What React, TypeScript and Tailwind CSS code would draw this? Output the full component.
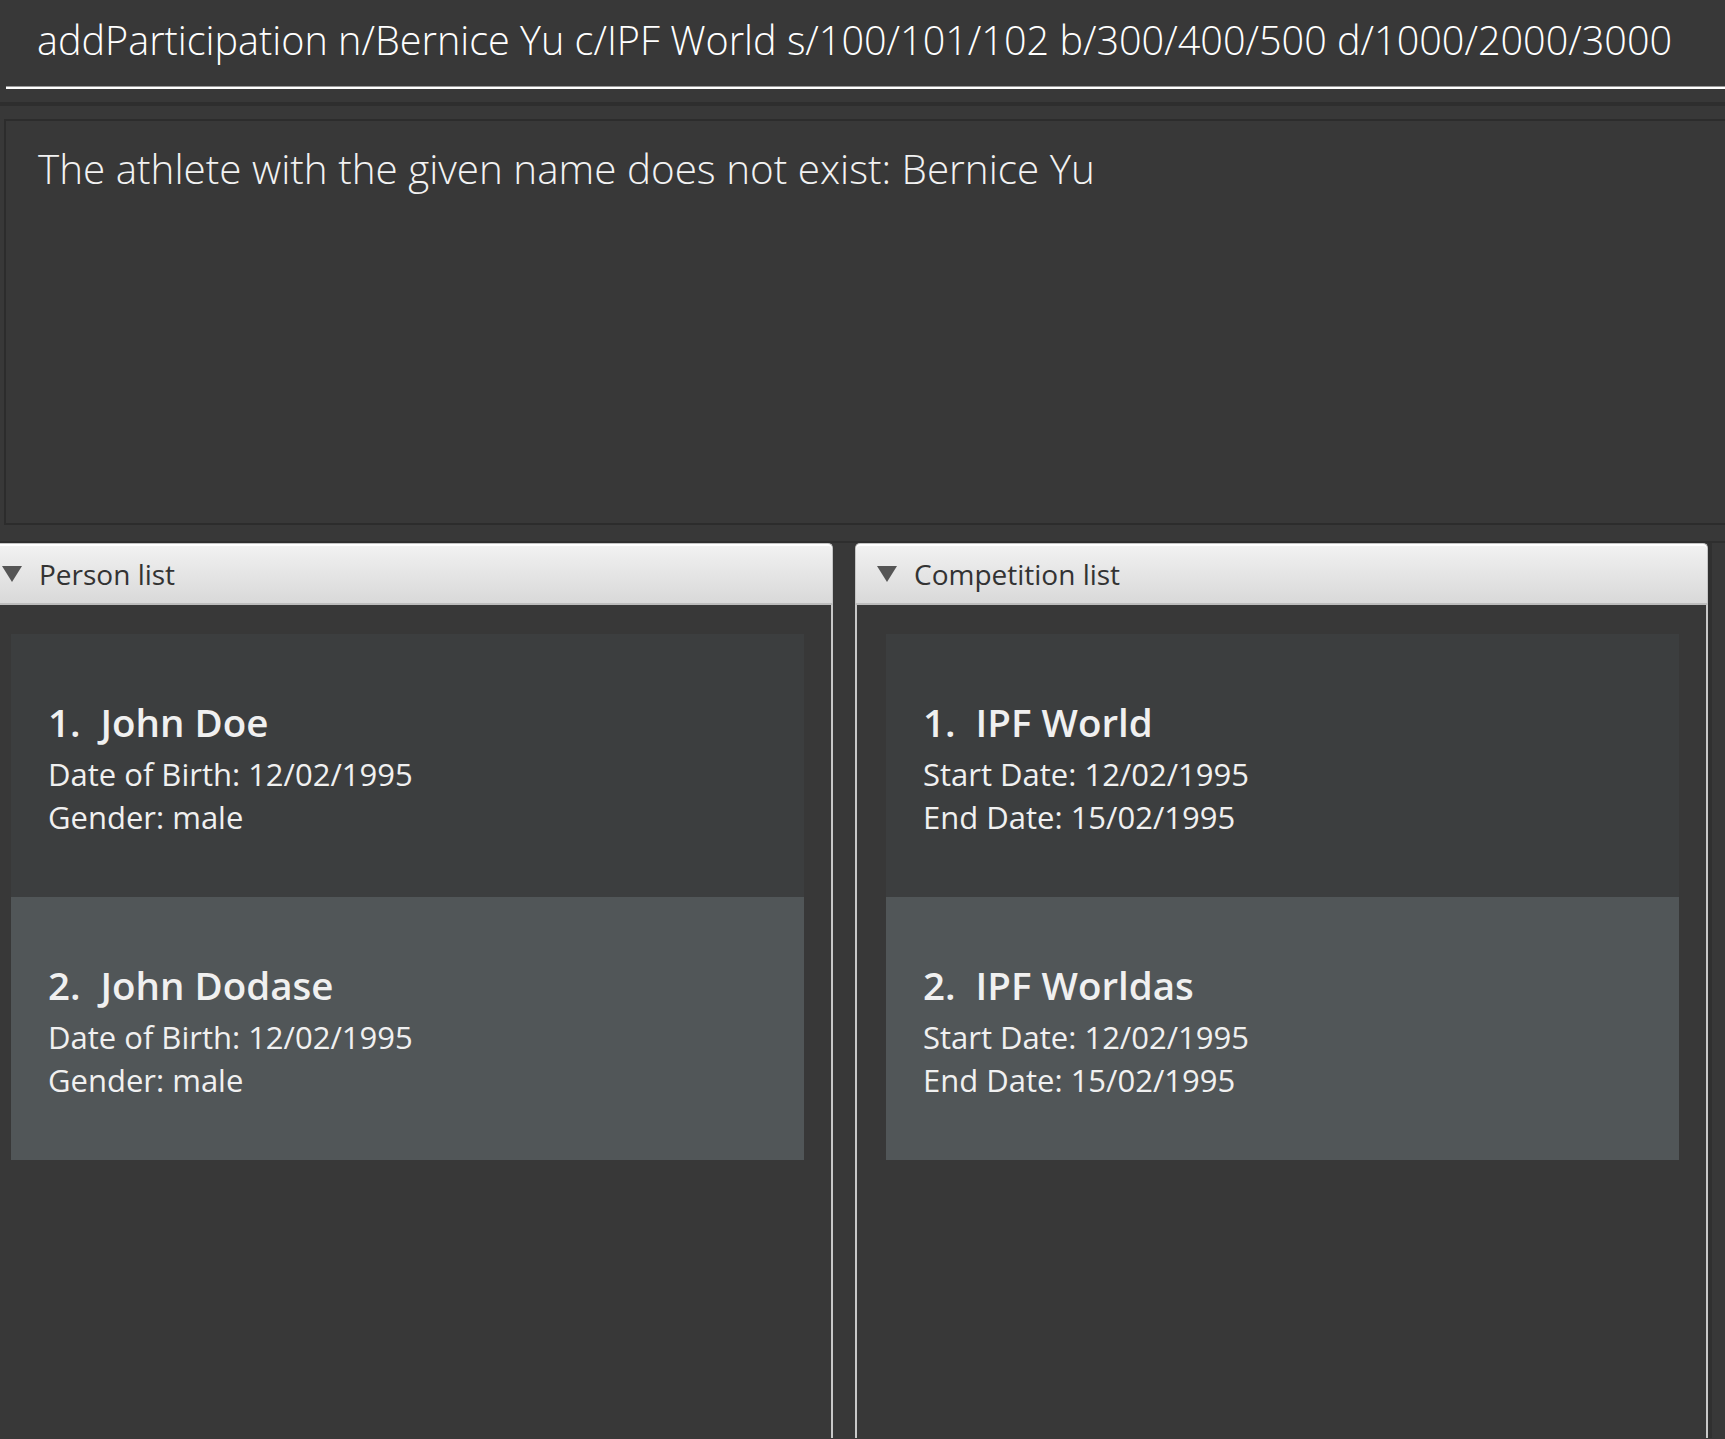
const persons = [
  { name: "John Doe", dob: "12/02/1995", gender: "male" },
  { name: "John Dodase", dob: "12/02/1995", gender: "male" },
]

const competitions = [
  { name: "IPF World", start: "12/02/1995", end: "15/02/1995" },
  { name: "IPF Worldas", start: "12/02/1995", end: "15/02/1995" },
]

const Header = ({ title }: { title: string }) => (
  <div className="flex h-[62px] items-center rounded-t-[5px] border border-b-2 border-[#c4c4c4] border-b-[#bdbdbd] bg-gradient-to-b from-[#f2f2f2] to-[#d9d9d9] shadow-[inset_0_2px_0_#ffffff]">
    <svg width="20" height="16" viewBox="0 0 20 16" className="ml-[21px] shrink-0">
      <polygon points="0,0 20,0 10,16" fill="#555555" />
    </svg>
    <span className="ml-[17px] text-[28px] leading-[28px] text-[#333333]">{title}</span>
  </div>
)

const Card = ({
  index,
  title,
  lines,
}: {
  index: number
  title: string
  lines: string[]
}) => (
  <div
    className={`h-[263px] pl-[37px] pt-[69px] ${
      index % 2 === 1 ? "bg-[#3c3e3f]" : "bg-[#515658]"
    }`}
  >
    <div className="whitespace-nowrap text-[38.5px] font-semibold leading-[38.5px] text-[#f0f0f0]">
      <span>{index}.</span>
      <span className="ml-[20px]">{title}</span>
    </div>
    <div className="mt-[11px] text-[31px] leading-[43px] text-[#f0f0f0]">
      {lines.map((l) => (
        <div key={l}>{l}</div>
      ))}
    </div>
  </div>
)

const Panel = ({
  title,
  children,
  className,
}: {
  title: string
  children: React.ReactNode
  className?: string
}) => (
  <div className={`flex w-[853px] shrink-0 flex-col ${className || ""}`}>
    <Header title={title} />
    <div className="flex-1 border-x-2 border-[#c8c8c8] bg-[#383838] pl-[29px] pr-[27px] pt-[29px]">
      {children}
    </div>
  </div>
)

export default function App() {
  return (
    <div
      className="h-[1439px] w-[1725px] overflow-hidden bg-[#383838] text-white"
      style={{ fontFamily: '"Open Sans", "Noto Sans", sans-serif' }}
    >
      <div className="h-[86px] pl-[37px] pt-[21px]">
        <div className="whitespace-nowrap text-[39.6px] font-light leading-[39.6px] text-white">
          addParticipation n/Bernice Yu c/IPF World s/100/101/102 b/300/400/500 d/1000/2000/3000
        </div>
      </div>
      <div className="ml-[6px] h-[3px] border-t border-[#9a9a9a] bg-white" />
      <div className="h-[13px]" />
      <div className="h-[4px] bg-[#2e2e2e]" />
      <div className="h-[13px]" />
      <div className="ml-[4px] h-[406px] border-2 border-r-0 border-[#2c2c2c] bg-[#383838] pl-[32px] pt-[28px]">
        <div className="whitespace-nowrap text-[40.4px] font-light leading-[40.4px] text-[#f2f2f2]">
          The athlete with the given name does not exist: Bernice Yu
        </div>
      </div>
      <div className="h-[16px]" />
      <div className="h-[2px] bg-[#2e2e2e]" />
      <div className="flex h-[895px]">
        <Panel title="Person list" className="-ml-[20px]">
          {persons.map((p, i) => (
            <Card
              key={p.name}
              index={i + 1}
              title={p.name}
              lines={[`Date of Birth: ${p.dob}`, `Gender: ${p.gender}`]}
            />
          ))}
        </Panel>
        <div className="w-[22px] shrink-0 bg-[#383838]" />
        <Panel title="Competition list">
          {competitions.map((c, i) => (
            <Card
              key={c.name}
              index={i + 1}
              title={c.name}
              lines={[`Start Date: ${c.start}`, `End Date: ${c.end}`]}
            />
          ))}
        </Panel>
        <div className="flex-1 border-l-4 border-[#303030] bg-[#383838]" />
      </div>
    </div>
  )
}
